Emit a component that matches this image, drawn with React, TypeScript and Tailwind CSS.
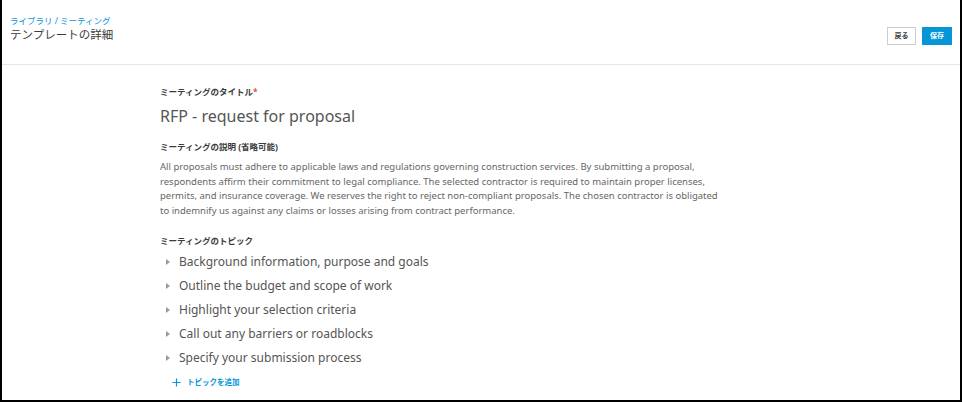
import React from "react";

const topics = [
  "Background information, purpose and goals",
  "Outline the budget and scope of work",
  "Highlight your selection criteria",
  "Call out any barriers or roadblocks",
  "Specify your submission process",
];

export default function App() {
  const font = { fontFamily: '"Noto Sans", "Noto Sans CJK JP", sans-serif' };
  return (
    <div
      className="w-[962px] h-[402px] bg-white border-x-2 border-b-2 border-black overflow-hidden flex flex-col"
      style={font}
    >
      <div className="h-[65px] shrink-0 border-b border-[#e6e6e6] flex justify-between pl-[8px] pr-[8px]">
        <div className="pt-[15px]">
          <div className="text-[8.5px] leading-[12px] text-[#0696d7]">ライブラリ / ミーティング</div>
          <div className="text-[11.5px] leading-[16px] text-[#3c3c3c]">テンプレートの詳細</div>
        </div>
        <div className="flex gap-[6px] pt-[27px]">
          <button className="h-[18px] w-[29px] border border-[#cccccc] bg-white text-[7px] font-bold text-[#3c3c3c] flex items-center justify-center">
            戻る
          </button>
          <button className="h-[18px] w-[30px] bg-[#0696d7] text-[7px] font-bold text-white flex items-center justify-center">
            保存
          </button>
        </div>
      </div>
      <div className="pl-[158px] pt-[21px]">
        <div className="text-[8.5px] leading-[12px] font-bold text-[#3c3c3c]">
          ミーティングのタイトル<span className="text-[#ec4a41]">*</span>
        </div>
        <div className="text-[16px] leading-[24px] text-[#555555] mt-[6px]">RFP - request for proposal</div>
        <div className="text-[8.5px] leading-[12px] font-bold text-[#3c3c3c] mt-[13px]">ミーティングの説明 (省略可能)</div>
        <div className="text-[9.5px] leading-[14.5px] text-[#666666] mt-[7px] w-[580px]">
          All proposals must adhere to applicable laws and regulations governing construction services. By submitting a proposal,
          <br />
          respondents affirm their commitment to legal compliance. The selected contractor is required to maintain proper licenses,
          <br />
          permits, and insurance coverage. We reserves the right to reject non-compliant proposals. The chosen contractor is obligated
          <br />
          to indemnify us against any claims or losses arising from contract performance.
        </div>
        <div className="text-[8.5px] leading-[12px] font-bold text-[#3c3c3c] mt-[17px]">ミーティングのトピック</div>
        <div className="mt-[3px] flex flex-col">
          {topics.map((t) => (
            <div key={t} className="h-[24px] flex items-center">
              <svg width="10" height="10" viewBox="0 0 10 10" className="ml-[3px] mr-[6px]">
                <path d="M3 2 L7 5 L3 8 Z" fill="#999999" />
              </svg>
              <span className="text-[12px] text-[#555555]">{t}</span>
            </div>
          ))}
        </div>
        <div className="flex items-center mt-[7px] pl-[12px] text-[#0696d7]">
          <svg width="9" height="9" viewBox="0 0 9 9" className="mr-[6px]">
            <path d="M4.5 0.5 V8.5 M0.5 4.5 H8.5" stroke="#0696d7" strokeWidth="1.2" />
          </svg>
          <span className="text-[7.5px] font-bold">トピックを追加</span>
        </div>
      </div>
    </div>
  );
}
